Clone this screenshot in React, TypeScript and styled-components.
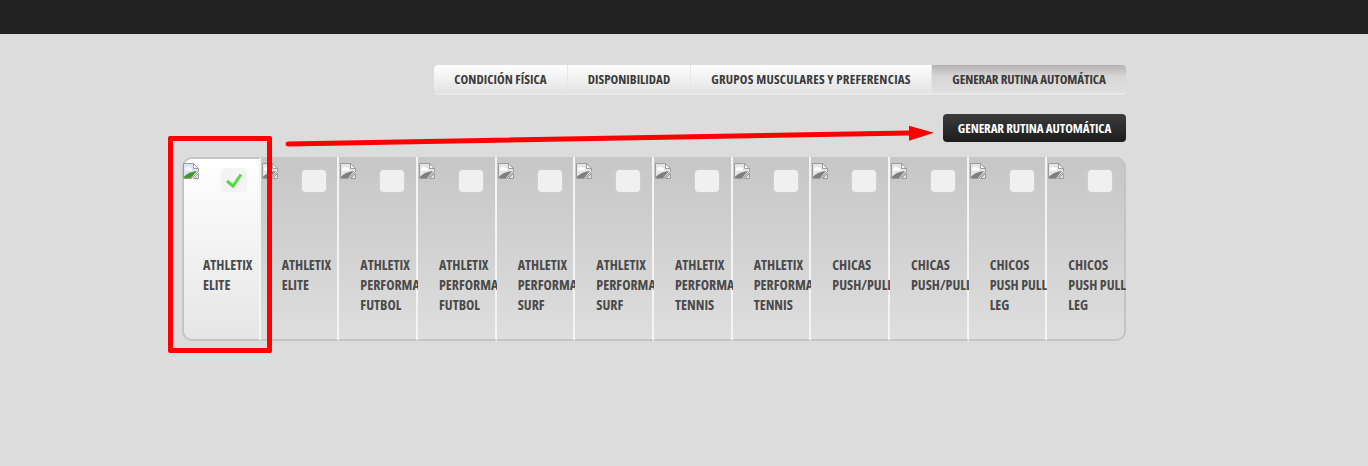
import React from "react";
import styled, { createGlobalStyle } from "styled-components";

const tabs = [
  { label: "CONDICIÓN FÍSICA", width: 134, spacing: 0.05 },
  { label: "DISPONIBILIDAD", width: 123, spacing: 0 },
  { label: "GRUPOS MUSCULARES Y PREFERENCIAS", width: 241, spacing: 0.2 },
  { label: "GENERAR RUTINA AUTOMÁTICA", width: 194, spacing: -0.1 },
];

const routines = [
  "ATHLETIX ELITE",
  "ATHLETIX ELITE",
  "ATHLETIX PERFORMANCE FUTBOL",
  "ATHLETIX PERFORMANCE FUTBOL",
  "ATHLETIX PERFORMANCE SURF",
  "ATHLETIX PERFORMANCE SURF",
  "ATHLETIX PERFORMANCE TENNIS",
  "ATHLETIX PERFORMANCE TENNIS",
  "CHICAS PUSH/PULL",
  "CHICAS PUSH/PULL",
  "CHICOS PUSH PULL LEG",
  "CHICOS PUSH PULL LEG",
];

function BrokenImage() {
  return (
    <BrokenIcon width="16" height="16" viewBox="0 0 16 16">
      <path d="M0.5 0.5H10.5L15.5 5.5V8.5L8.5 15.5H0.5Z" fill="#dce6fa" stroke="#9c9c9c" />
      <path d="M10.5 0.5V5.5H15.5Z" fill="#f4f4f4" stroke="#9c9c9c" />
      <path d="M2 6.5C2 4.5 4.5 3.5 6 4.5C8 4 9.5 5.5 9 7.5H2Z" fill="#fff" />
      <path d="M1.2 15V13.2L6 10L11 8.5L14 8L8 15Z" fill="#3f9a22" />
      <path d="M15.5 10.5V15.5H10.5Z" fill="#e2e2e2" stroke="#9c9c9c" />
    </BrokenIcon>
  );
}

export default function App() {
  return (
    <>
      <GlobalStyle />
      <TopBar />
      <Main>
        <Tabs>
          {tabs.map((tab, index) => (
            <Tab key={tab.label} $width={tab.width} $spacing={tab.spacing} $active={index === tabs.length - 1}>
              {tab.label}
            </Tab>
          ))}
        </Tabs>
        <ActionRow>
          <GenerateButton>GENERAR RUTINA AUTOMÁTICA</GenerateButton>
        </ActionRow>
        <RoutineList>
          {routines.map((name, index) => (
            <RoutineCard key={index} $selected={index === 0}>
              <BrokenImage />
              <CheckBox $selected={index === 0}>
                {index === 0 && (
                  <svg width="20" height="18" viewBox="0 0 20 18">
                    <path d="M3 10L9 15L17 3.5" fill="none" stroke="#4fdc3c" strokeWidth="3" />
                  </svg>
                )}
              </CheckBox>
              <RoutineName>{name}</RoutineName>
            </RoutineCard>
          ))}
        </RoutineList>
      </Main>
      <Highlight />
      <Arrow width="660" height="30" viewBox="0 0 660 30">
        <path d="M5 19L626 8" stroke="#f00" strokeWidth="5" strokeLinecap="round" fill="none" />
        <path d="M626 0.7L651 7.7L626 15.7Z" fill="#f00" />
      </Arrow>
    </>
  );
}

const GlobalStyle = createGlobalStyle`
  html, body {
    margin: 0;
    height: 466px;
    overflow: hidden;
    background: #dcdcdc;
    font-family: "Open Sans", "Liberation Sans", sans-serif;
    font-stretch: 75%;
  }
`;

const TopBar = styled.div`
  height: 34px;
  background: #222;
`;

const Main = styled.div`
  width: 944px;
  margin-left: 182px;
  padding-top: 31px;
`;

const Tabs = styled.div`
  display: flex;
  justify-content: flex-end;
  height: 30px;
`;

const Tab = styled.div<{ $active: boolean; $width: number; $spacing: number }>`
  display: flex;
  align-items: center;
  justify-content: center;
  box-sizing: border-box;
  width: ${(p) => p.$width}px;
  font-size: 13px;
  font-weight: 700;
  letter-spacing: ${(p) => p.$spacing}px;
  white-space: nowrap;
  color: #3a3a3a;
  background: ${(p) => (p.$active ? "linear-gradient(#b4b2b2, #d8d5d5 40%, #e2dfdf)" : "linear-gradient(#fff, #e2e2e2)")};
  border-bottom: 2px solid #e8e8e8;
  border-right: 1px solid #e6e6e6;

  &:first-child {
    border-radius: 4px 0 0 4px;
  }
  &:last-child {
    border-radius: 0 4px 4px 0;
    border-right: 0;
  }
`;

const ActionRow = styled.div`
  display: flex;
  justify-content: flex-end;
  margin-top: 19px;
`;

const GenerateButton = styled.button`
  width: 183px;
  height: 28px;
  padding: 0;
  border: 0;
  border-radius: 4px;
  background: linear-gradient(#3c3c3c, #1c1c1c);
  color: #fff;
  font-family: inherit;
  font-stretch: 75%;
  font-size: 13px;
  font-weight: 700;
  letter-spacing: -0.1px;
`;

const RoutineList = styled.div`
  display: grid;
  grid-template-columns: repeat(12, minmax(0, 1fr));
  height: 184px;
  margin-top: 15px;
`;

const RoutineCard = styled.div<{ $selected: boolean }>`
  position: relative;
  box-sizing: border-box;
  padding: 98px 0 0 21px;
  border-right: 2px solid #f4f4f4;
  border-bottom: 2px solid #c4c4c4;
  background: ${(p) => (p.$selected ? "linear-gradient(#fff, #e6e6e6)" : "linear-gradient(#c6c6c6, #dedede)")};

  &:first-child {
    border-left: 2px solid #c4c4c4;
    border-top: 2px solid #c4c4c4;
    border-radius: 10px 0 0 10px;
    padding-left: 19px;
    padding-top: 96px;
  }
  &:last-child {
    border-right: 2px solid #c4c4c4;
    border-radius: 0 10px 10px 0;
  }
`;

const BrokenIcon = styled.svg`
  position: absolute;
  top: 6px;
  left: 1px;
  filter: grayscale(1);

  ${RoutineCard}:first-child & {
    filter: none;
    top: 4px;
    left: -1px;
  }
`;

const CheckBox = styled.div<{ $selected: boolean }>`
  position: absolute;
  top: 13px;
  left: 41px;
  display: flex;
  align-items: center;
  justify-content: center;
  width: 24px;
  height: 22px;
  border-radius: 4px;
  background: ${(p) => (p.$selected ? "#f4f4f4" : "#f0f0f0")};
  box-shadow: 0 0 2px #ddd;

  ${RoutineCard}:first-child & {
    top: 10px;
    left: 38px;
  }
`;

const RoutineName = styled.div`
  width: 62px;
  font-size: 14px;
  font-weight: 700;
  line-height: 20px;
  color: #4a4a4a;
`;

const Highlight = styled.div`
  position: absolute;
  left: 168px;
  top: 136px;
  width: 94px;
  height: 207px;
  border: 5px solid #f00;
  border-radius: 2px;
`;

const Arrow = styled.svg`
  position: absolute;
  left: 283px;
  top: 125px;
`;
